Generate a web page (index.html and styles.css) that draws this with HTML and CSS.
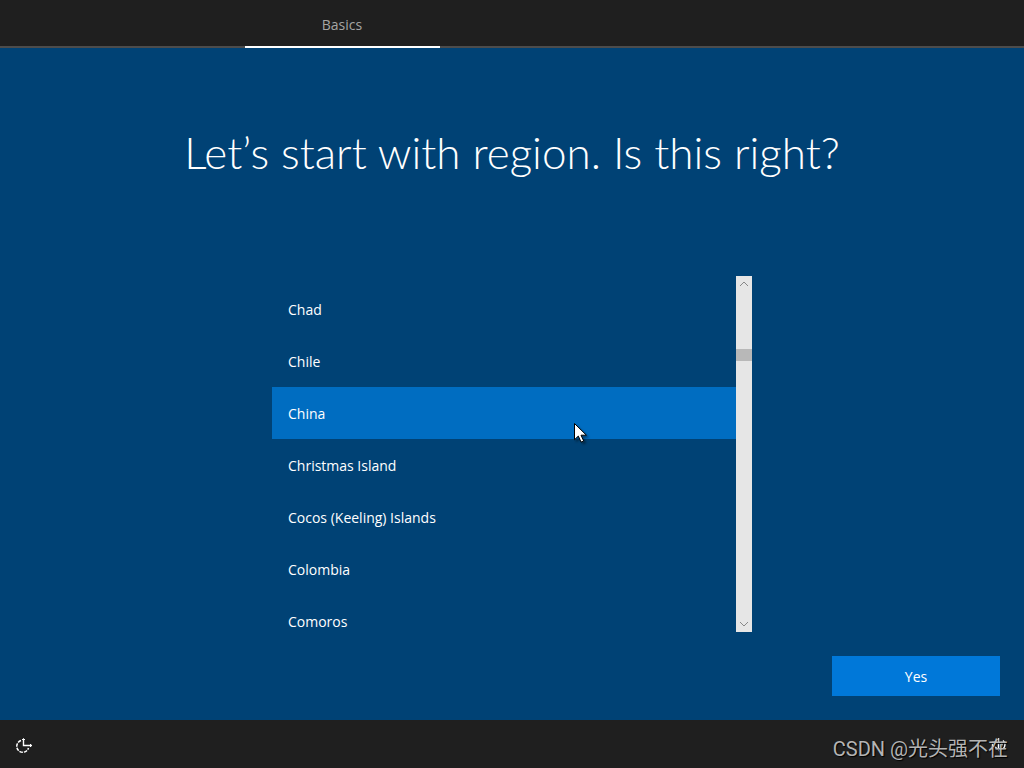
FILE: index.html
```html
<!DOCTYPE html>
<html lang="en">
<head>
    <meta charset="UTF-8">
    <meta name="viewport" content="width=device-width, initial-scale=1.0">
    <title>Region</title>
    <link rel="stylesheet" href="styles.css">
</head>
<body>
    <header class="topbar">
        <div class="tab active">Basics</div>
    </header>

    <main class="content">
        <h1>Let’s start with region. Is this right?</h1>
        <div class="region-box">
            <ul class="region-list" role="listbox" aria-label="Region" tabindex="0">
                <li role="option">Chad</li>
                <li role="option">Chile</li>
                <li role="option" class="selected" aria-selected="true">China</li>
                <li role="option">Christmas Island</li>
                <li role="option">Cocos (Keeling) Islands</li>
                <li role="option">Colombia</li>
                <li role="option">Comoros</li>
            </ul>
            <div class="scrollbar">
                <button type="button" class="arrow" aria-label="Scroll up">
                    <svg width="10" height="6" viewBox="0 0 10 6"><path d="M1 5l4-4 4 4"/></svg>
                </button>
                <div class="track"><div class="thumb"></div></div>
                <button type="button" class="arrow" aria-label="Scroll down">
                    <svg width="10" height="6" viewBox="0 0 10 6"><path d="M1 1l4 4 4-4"/></svg>
                </button>
            </div>
            <svg class="cursor" width="14" height="21" viewBox="0 0 14 21">
                <path d="M.5.5v16.2l3.8-3.6 2.8 6 2.6-1.2-2.7-5.7h5.4z" fill="#fff" stroke="#000"/>
            </svg>
        </div>
        <div class="actions">
            <button type="button" class="primary">Yes</button>
        </div>
    </main>

    <footer class="bottombar">
        <button type="button" class="icon-btn" aria-label="Ease of Access">
            <svg width="17" height="15" viewBox="0 0 17 15" fill="none" stroke="#fff">
                <path d="M5 2.500A6 6 0 1 0 12.500 10" stroke-width="1.500" stroke-dasharray="3.500 1"/>
                <path d="M7.500 1v6.500H16" stroke-width="1.400"/>
                <path d="M6 2l1.500-1.500L9 2M14 6l1.500 1.500L14 9"/>
            </svg>
        </button>
        <button type="button" class="icon-btn" aria-label="Volume">
            <svg width="17" height="14" viewBox="0 0 17 14" fill="none" stroke="#fff" stroke-width="1.400">
                <path d="M1.500 4.500v4h2l4 3.500V1l-4 3.500zM10 4q2 2.500 0 5M12 2.500q4 4 0 8.500"/>
            </svg>
        </button>
        <span class="watermark">CSDN @光头强不在</span>
    </footer>
</body>
</html>
```

FILE: styles.css
```css
* { box-sizing: border-box; }
body { margin: 0; min-height: 100vh; display: flex; flex-direction: column; background-color: #004275; color: #fff; font-family: "Open Sans", "Noto Sans", sans-serif; font-size: 14px; line-height: 20px; }
button { border: none; color: inherit; font: inherit; padding: 0; cursor: pointer; }
svg { display: block; }

.topbar { height: 48px; display: flex; justify-content: center; background-color: #1f1f1f; box-shadow: inset 0 -2px #4c4c4c; padding-right: 340px; }
.tab { width: 195px; padding-top: 15px; text-align: center; color: #a5a5a5; }
.tab.active { border-bottom: 2px solid #fff; }

.content { flex: 1; display: flex; flex-direction: column; align-items: center; padding: 72px 24px 24px; }
h1 { margin: 0 0 92px; font-family: Lato, "Open Sans", sans-serif; font-size: 44px; font-weight: 300; line-height: 64px; text-align: center; }

.region-box { position: relative; display: flex; width: 100%; max-width: 480px; height: 356px; }
.region-list { flex: 1; margin: 0; padding: 7px 0 0; list-style: none; overflow: hidden; outline: none; }
.region-list li { padding: 17px 16px 15px; cursor: default; }
.region-list .selected { background-color: #006dc1; }

.scrollbar { width: 16px; display: flex; flex-direction: column; background-color: #e6e6e6; }
.arrow { height: 16px; display: flex; align-items: center; justify-content: center; background: none; }
.arrow path { fill: none; stroke: #888; }
.track { flex: 1; padding-top: 57px; }
.thumb { height: 12px; background-color: #b8b8b8; }
.cursor { position: absolute; left: 302px; top: 147px; filter: drop-shadow(2px 2px 1px rgba(0,0,0,0.4)); }

.actions { align-self: stretch; display: flex; justify-content: flex-end; margin-top: 24px; }
.primary { width: 168px; height: 40px; padding-top: 2px; background-color: #0078d9; }

.bottombar { position: relative; height: 48px; display: flex; align-items: center; justify-content: space-between; padding: 2px 16px 0; background-color: #1f1f1f; }
.icon-btn { background: none; }
.watermark { position: absolute; right: 16px; bottom: 7px; font-family: Roboto, "Noto Sans CJK SC", sans-serif; font-size: 20px; line-height: 24px; color: #b4b4b4; text-shadow: 1px 1px 1px #000; }
```
